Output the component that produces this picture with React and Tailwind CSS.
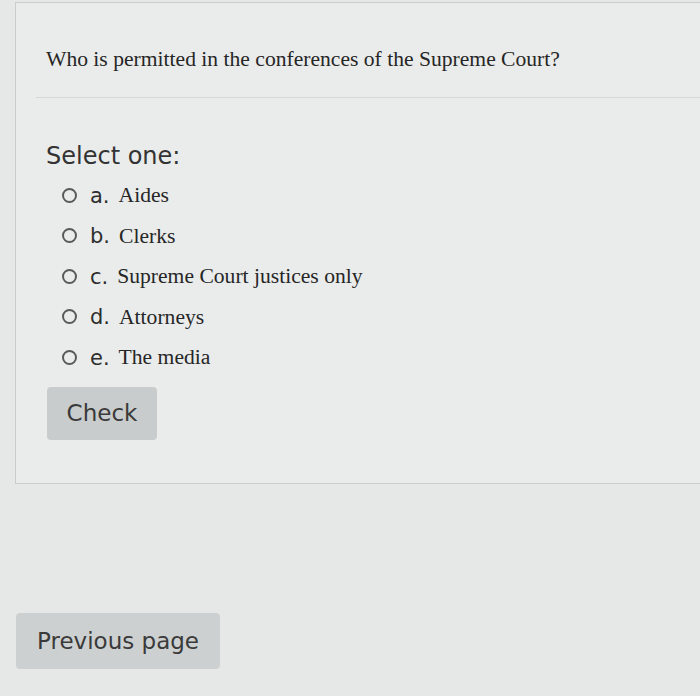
export default function App() {
  const options = [
    { letter: "a.", text: "Aides" },
    { letter: "b.", text: "Clerks" },
    { letter: "c.", text: "Supreme Court justices only" },
    { letter: "d.", text: "Attorneys" },
    { letter: "e.", text: "The media" },
  ];

  return (
    <div className="w-[700px] h-[696px] overflow-hidden bg-[#e6e8e7] pt-[2px]">
      {/* Question card */}
      <div className="ml-[15px] w-[720px] h-[482px] border border-[#c9cccb] bg-[#eaeceb]">
        <div className="ml-[20px] pl-[10px] pt-[44px] pb-[26px] border-b border-[#d6d9d8]">
          <p className="font-['Liberation_Serif',serif] text-[21.6px] text-[#262626] leading-6">
            Who is permitted in the conferences of the Supreme Court?
          </p>
        </div>

        <div className="pl-[30px] pt-[46px]">
          <div className="font-['DejaVu_Sans',sans-serif] text-[24px] text-[#333] leading-6">
            Select one:
          </div>

          <div className="mt-[7px] pl-[16px] flex flex-col">
            {options.map(o => (
              <div key={o.letter} className="flex items-center h-[40.5px]">
                <span className="w-[15px] h-[15px] rounded-full border-2 border-[#5a5a5a] shrink-0" />
                <span className="ml-[13px] mt-[2px] font-['DejaVu_Sans',sans-serif] text-[21px] text-[#2e2e2e]">
                  {o.letter}
                </span>
                <span className="ml-[9px] font-['Liberation_Serif',serif] text-[21.6px] text-[#262626]">
                  {o.text}
                </span>
              </div>
            ))}
          </div>

          <button className="mt-[9px] ml-[1px] w-[110px] h-[53px] rounded-[4px] bg-[#c9cccc] font-['DejaVu_Sans',sans-serif] text-[23px] text-[#3a3a3a]">
            Check
          </button>
        </div>
      </div>

      {/* Navigation */}
      <div className="mt-[129px] ml-[16px]">
        <button className="w-[204px] h-[56px] rounded-[4px] bg-[#cdd0d0] font-['DejaVu_Sans',sans-serif] text-[23px] text-[#3a3a3a]">
          Previous page
        </button>
      </div>
    </div>
  );
}
